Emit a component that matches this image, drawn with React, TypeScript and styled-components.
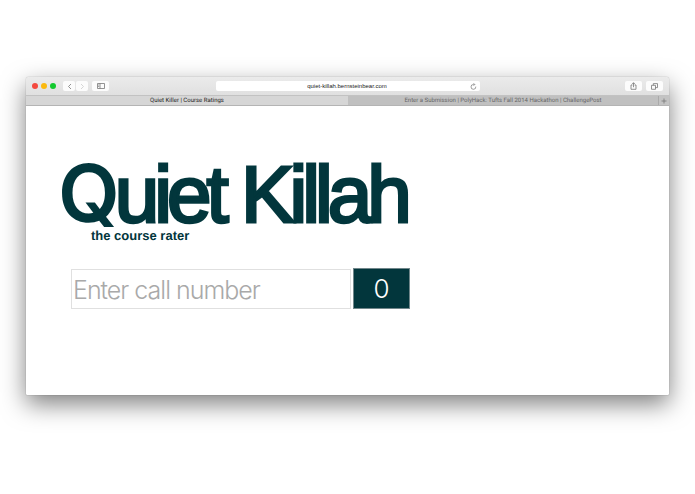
import React, { useState } from "react";
import styled, { createGlobalStyle } from "styled-components";

const ink = "#02363c";

const GlobalStyle = createGlobalStyle`
  * { box-sizing: border-box; }
  body {
    margin: 0;
    background: #fff;
    font-family: "Liberation Sans", Arial, sans-serif;
    text-rendering: geometricPrecision;
  }
`;

const Desktop = styled.div`
  min-height: 100vh;
  padding: 77px 26px 99px;
  display: flex;
`;

const BrowserWindow = styled.section`
  flex: 1;
  min-width: 0;
  display: flex;
  flex-direction: column;
  border-radius: 3px 3px 1px 1px;
  overflow: hidden;
  background: #fff;
  box-shadow: 0 0 1px rgba(0, 0, 0, 0.5), 0 9px 24px rgba(0, 0, 0, 0.5);
`;

const Toolbar = styled.header`
  height: 18px;
  display: grid;
  grid-template-columns: 1fr 264px 1fr;
  align-items: center;
  background: linear-gradient(#ebebeb, #e0e0e0);
`;

const ToolGroup = styled.div<{ $end?: boolean }>`
  display: flex;
  align-items: center;
  gap: 4px;
  justify-content: ${(p) => (p.$end ? "flex-end" : "flex-start")};
  padding: 0 6px;
`;

const Lights = styled.div`
  display: flex;
  gap: 3px;
`;

const Light = styled.button<{ $color: string }>`
  width: 6px;
  height: 6px;
  padding: 0;
  border: 0;
  border-radius: 50%;
  background: ${(p) => p.$color};
`;

const Pair = styled.div`
  display: flex;
  gap: 1px;
  margin-left: 3px;
`;

const ToolButton = styled.button<{ $narrow?: boolean }>`
  width: ${(p) => (p.$narrow ? 12 : 17)}px;
  height: 10px;
  padding: 0;
  border: 0;
  border-radius: 2px;
  display: grid;
  place-items: center;
  color: #777;
  background: #fcfcfc;
  &:disabled { color: #ccc; }
`;

const AddressBar = styled.div`
  height: 10px;
  display: flex;
  align-items: center;
  padding: 0 3px;
  border-radius: 2px;
  background: #fff;
`;

const Address = styled.input`
  flex: 1;
  min-width: 0;
  height: 10px;
  padding: 0 0 0 6px;
  border: 0;
  outline: 0;
  background: none;
  text-align: center;
  font: 6px "Liberation Sans", Arial, sans-serif;
  color: #222;
`;

const Reload = styled.button`
  width: 7px;
  height: 8px;
  padding: 0;
  border: 0;
  display: grid;
  place-items: center;
  background: none;
  color: #777;
`;

const Tabs = styled.nav`
  height: 11px;
  display: grid;
  grid-template-columns: 322fr 310fr 11px;
  border-top: 1px solid #c2c2c2;
  border-bottom: 1px solid #b4b4b4;
  background: #c3c3c3;
`;

const Tab = styled.a<{ $active?: boolean }>`
  display: grid;
  place-items: center;
  min-width: 0;
  white-space: nowrap;
  font-family: "Roboto", sans-serif;
  font-size: 6px;
  line-height: 9px;
  text-decoration: none;
  color: ${(p) => (p.$active ? "#222" : "#666")};
  background: ${(p) => (p.$active ? "#d6d6d6" : "#c0c0c0")};
`;

const NewTab = styled.button`
  padding: 0;
  border: 0;
  border-left: 1px solid #aaa;
  display: grid;
  place-items: center;
  background: #c3c3c3;
  color: #777;
`;

const Page = styled.main`
  flex: 1;
  padding: 57px 35px 86px 32px;
  color: ${ink};
`;

/* Display lettering is tracked tight so that neighbouring letters touch. */
const Title = styled.h1`
  margin: 0;
  font-family: "Liberation Sans", Arial, sans-serif;
  font-size: 80px;
  font-weight: 400;
  line-height: 64px;
  letter-spacing: -5px;
  white-space: nowrap;
  -webkit-text-stroke: 3px ${ink};
`;

/* The initial uses a face whose Q has a short tail, clear of the tagline. */
const Initial = styled.span`
  font-family: "Inter", sans-serif;
  font-weight: 600;
  line-height: 0;
  -webkit-text-stroke: 0;
`;

const Tagline = styled.p`
  margin: 1px 0 24px 33px;
  font-size: 13px;
  font-weight: 700;
  line-height: 16px;
`;

const Lookup = styled.form`
  display: flex;
  align-items: center;
  gap: 2px;
  max-width: 339px;
  margin-left: 13px;
`;

const CallNumber = styled.input`
  flex: 1;
  min-width: 0;
  height: 40px;
  padding: 2px 1px 0;
  border: 1px solid #e0e0e0;
  outline: 0;
  font: 300 25px "Inter", "Liberation Sans", sans-serif;
  letter-spacing: -1px;
  color: ${ink};
  &::placeholder { color: #a9a9a9; opacity: 1; }
`;

const Rate = styled.button`
  width: 57px;
  height: 41px;
  padding: 0;
  border: 1px solid #70868a;
  background: ${ink};
  color: #fff;
  font: 300 26px "Inter", "Liberation Sans", sans-serif;
`;

const stroke = { fill: "none", stroke: "currentColor", strokeWidth: 0.8 };

export default function App() {
  const [call, setCall] = useState("");
  return (
    <>
      <GlobalStyle />
      <Desktop>
        <BrowserWindow>
          <Toolbar>
            <ToolGroup>
              <Lights>
                <Light $color="#f4493f" aria-label="Close" />
                <Light $color="#fbb90f" aria-label="Minimize" />
                <Light $color="#12c92e" aria-label="Zoom" />
              </Lights>
              <Pair>
                <ToolButton $narrow aria-label="Back">
                  <svg width="5" height="7" viewBox="0 0 5 7" {...stroke}><path d="M4 1 1.5 3.5 4 6" /></svg>
                </ToolButton>
                <ToolButton $narrow disabled aria-label="Forward">
                  <svg width="5" height="7" viewBox="0 0 5 7" {...stroke}><path d="M1 1 3.5 3.5 1 6" /></svg>
                </ToolButton>
              </Pair>
              <ToolButton aria-label="Sidebar">
                <svg width="8" height="6" viewBox="0 0 8 6" {...stroke}><path d="M.5.5h7v5h-7zM3 .5v5M1.2 2h1M1.2 3.5h1" /></svg>
              </ToolButton>
            </ToolGroup>
            <AddressBar>
              <Address aria-label="Address" defaultValue="quiet-killah.bernsteinbear.com" />
              <Reload aria-label="Reload">
                <svg width="7" height="7" viewBox="0 0 7 7" {...stroke} strokeWidth={0.7}><path d="M5.8 3.6A2.4 2.4 0 1 1 3.6 1.5H4.6M3.5.2l1.3 1.3-1.3 1.3" /></svg>
              </Reload>
            </AddressBar>
            <ToolGroup $end>
              <ToolButton aria-label="Share">
                <svg width="7" height="8" viewBox="0 0 7 8" {...stroke}><path d="M2.4 3H1v4.3h5V3H4.6M3.5 5.2V.8M2 2.2 3.5.7 5 2.2" /></svg>
              </ToolButton>
              <ToolButton aria-label="Show all tabs">
                <svg width="7" height="7" viewBox="0 0 7 7" {...stroke}><path d="M.5 2.3h4v4h-4zM2.3 2.3V.6h4.2v4H4.5" /></svg>
              </ToolButton>
            </ToolGroup>
          </Toolbar>
          <Tabs>
            <Tab href="#" $active>Quiet Killer | Course Ratings</Tab>
            <Tab href="#post">Enter a Submission | PolyHack: Tufts Fall 2014 Hackathon | ChallengePost</Tab>
            <NewTab aria-label="New tab">
              <svg width="6" height="6" viewBox="0 0 6 6" {...stroke}><path d="M3 .5v5M.5 3h5" /></svg>
            </NewTab>
          </Tabs>
          <Page>
            <Title><Initial>Q</Initial>uiet Killah</Title>
            <Tagline>the course rater</Tagline>
            <Lookup onSubmit={(e) => e.preventDefault()}>
              <CallNumber
                aria-label="Call number"
                placeholder="Enter call number"
                value={call}
                onChange={(e) => setCall(e.target.value)}
              />
              <Rate type="submit">0</Rate>
            </Lookup>
          </Page>
        </BrowserWindow>
      </Desktop>
    </>
  );
}
